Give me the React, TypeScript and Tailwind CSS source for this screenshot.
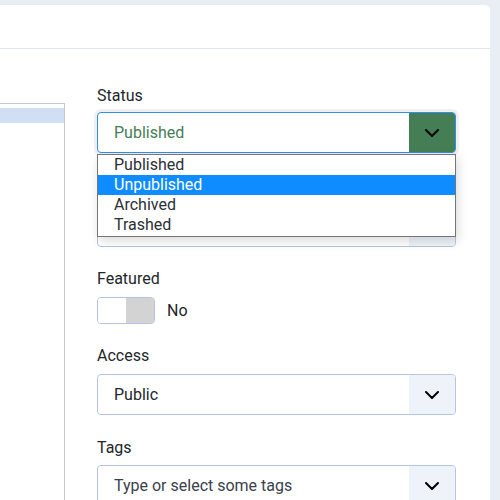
import React from "react";

function Chevron() {
  return (
    <svg width="14" height="8" viewBox="0 0 14 8" fill="none">
      <path d="M1 1l6 6 6-6" stroke="#000" strokeWidth="2" strokeLinecap="round" strokeLinejoin="round" />
    </svg>
  );
}

function Select({ text, btn = "bg-[#eef3fa]", textCls = "text-[#22262a]" }: { text: string; btn?: string; textCls?: string }) {
  return (
    <div className="h-[41px] w-full flex rounded-[4px] border border-[#b6c5dd] bg-white overflow-hidden">
      <div className={`flex-1 flex items-center pl-[16px] text-[16px] ${textCls}`}>{text}</div>
      <div className={`w-[46px] flex items-center justify-center ${btn}`}>
        <Chevron />
      </div>
    </div>
  );
}

export default function App() {
  return (
    <div className="min-h-[500px] h-[500px] bg-[#e9eef5] pt-[5px] pr-[10px] overflow-hidden" style={{ fontFamily: "Roboto, 'Noto Sans', sans-serif" }}>
      <div className="bg-white rounded-tr-[5px] h-[495px] overflow-hidden">
        <div className="h-[44px] border-b border-[#dfe6f1]" />
        <div className="flex gap-[32px]">
          <div className="w-[65px] mt-[54px] border-t border-r border-[#c9c9c9] h-[400px] pt-[4px]">
            <div className="h-[15px] bg-[#d0dff4]" />
          </div>
          <div className="w-[359px] pt-[35px] text-[#22262a]">
            <div className="text-[16px] leading-[24px] mb-[4px]">Status</div>
            <div className="relative mb-[23px]">
              <div className="h-[41px] w-full flex rounded-[4px] border border-[#2f8ef0] bg-white overflow-hidden shadow-[0_0_0_3px_rgba(0,0,0,0.06)]">
                <div className="flex-1 flex items-center pl-[16px] text-[16px] text-[#457d54]">Published</div>
                <div className="w-[46px] flex items-center justify-center bg-[#457d54]">
                  <Chevron />
                </div>
              </div>
              <div className="absolute left-0 right-0 top-[42px] z-10 bg-white border border-[#767676] shadow-[2px_4px_10px_rgba(0,0,0,0.15)] text-[16px] leading-[20px] text-[#2b2f36]">
                <div className="pl-[16px] h-[20px]">Published</div>
                <div className="pl-[16px] h-[20px] bg-[#0f8cff] text-white">Unpublished</div>
                <div className="pl-[16px] h-[20px]">Archived</div>
                <div className="pl-[16px] h-[21px]">Trashed</div>
              </div>
            </div>
            <div className="h-[24px] mb-[6px]" />
            <div className="mb-[20px]">
              <Select text="" />
            </div>
            <div className="text-[16px] leading-[24px] mb-[6px]">Featured</div>
            <div className="flex items-center mb-[20px]">
              <div className="w-[58px] h-[27px] rounded-[4px] border border-[#b6c5dd] flex overflow-hidden">
                <div className="w-[28px] bg-white" />
                <div className="flex-1 bg-[#d3d3d3]" />
              </div>
              <span className="ml-[12px] text-[16px]">No</span>
            </div>
            <div className="text-[16px] leading-[24px] mb-[6px]">Access</div>
            <div className="mb-[21px]">
              <Select text="Public" />
            </div>
            <div className="text-[16px] leading-[24px] mb-[5px]">Tags</div>
            <div>
              <Select text="Type or select some tags" textCls="text-[#3a414b]" />
            </div>
          </div>
        </div>
      </div>
    </div>
  );
}
